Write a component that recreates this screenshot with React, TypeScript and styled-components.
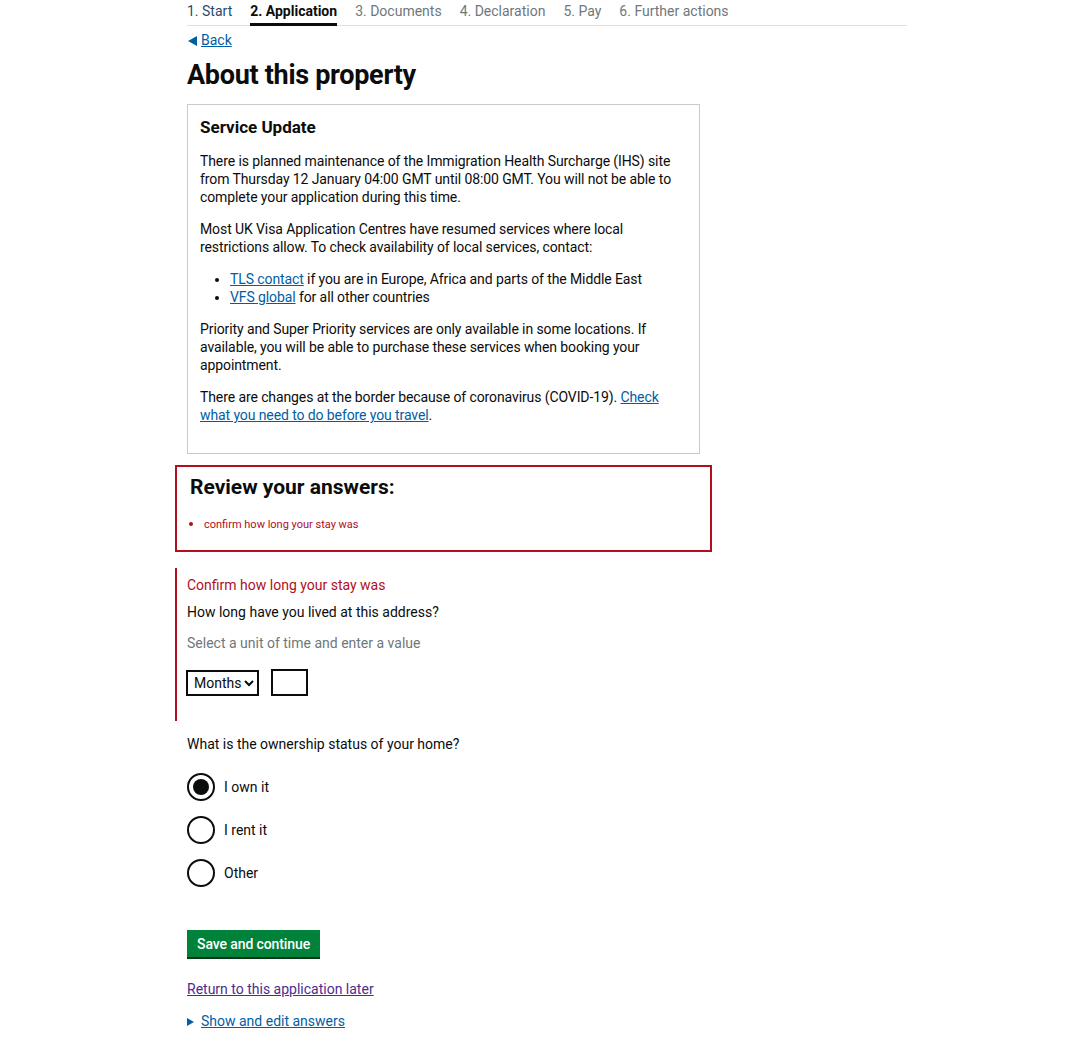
import React from "react";
import styled, { createGlobalStyle } from "styled-components";

const Global = createGlobalStyle`
  html, body { margin: 0; padding: 0; background: #fff; }
  body { font-family: Roboto, "Liberation Sans", Arial, sans-serif; color: #0b0c0c; }
  * { box-sizing: border-box; }
`;

const Page = styled.div`
  width: 720px;
  margin-left: 187px;
  display: flex;
  flex-direction: column;
`;

const StepNav = styled.nav`
  display: flex;
  gap: 18px;
  border-bottom: 1px solid #dee0e2;
  height: 26px;
  align-items: flex-start;
  padding-top: 3px;
`;

const Step = styled.span<{ $state: "done" | "active" | "todo" }>`
  font-size: 14px;
  line-height: 17px;
  height: 23px;
  color: ${(p) => (p.$state === "done" ? "#2b4a6b" : p.$state === "active" ? "#0b0c0c" : "#6f777b")};
  font-weight: ${(p) => (p.$state === "active" ? 700 : 400)};
  border-bottom: ${(p) => (p.$state === "active" ? "3px solid #0b0c0c" : "3px solid transparent")};
`;

const BackLink = styled.a`
  margin-top: 6px;
  display: inline-flex;
  align-items: center;
  gap: 4px;
  font-size: 14px;
  line-height: 17px;
  color: #005ea5;
  text-decoration: underline;
  align-self: flex-start;
  &::before {
    content: "";
    margin-left: 1px;
    border-style: solid;
    border-width: 5.5px 9px 5.5px 0;
    border-color: transparent #005ea5 transparent transparent;
  }
`;

const H1 = styled.h1`
  margin: 10px 0 0;
  font-size: 27px;
  line-height: 32px;
  font-weight: 700;
  letter-spacing: -0.3px;
`;

const Notice = styled.section`
  margin-top: 13px;
  width: 513px;
  border: 1px solid #c8cacb;
  padding: 12px 12px 29px;
  letter-spacing: -0.1px;
`;

const NoticeTitle = styled.h2`
  margin: 0 0 15px;
  font-size: 17px;
  line-height: 20px;
  font-weight: 700;
  letter-spacing: 0;
`;

const P = styled.p`
  margin: 0 0 14px;
  font-size: 14px;
  line-height: 18px;
  &:last-child { margin-bottom: 0; }
`;

const List = styled.ul`
  margin: 0 0 14px;
  padding-left: 30px;
  font-size: 14px;
  line-height: 18px;
`;

const Link = styled.a`
  color: #005ea5;
  text-decoration: underline;
`;

const ErrorSummary = styled.section`
  margin: 11px 0 0 -12px;
  width: 537px;
  border: 2px solid #b10e1e;
  padding: 8px 13px 18px;
`;

const ErrorTitle = styled.h2`
  margin: 0 0 17px;
  font-size: 21px;
  line-height: 25px;
  font-weight: 700;
`;

const ErrorList = styled.ul`
  margin: 0;
  padding-left: 14px;
  color: #b10e1e;
  font-size: 11px;
  line-height: 14px;
  li::marker { font-size: 13px; }
`;

const ErrorGroup = styled.div`
  margin: 16px 0 0 -12px;
  border-left: 2px solid #b10e1e;
  padding: 9px 0 25px 10px;
  display: flex;
  flex-direction: column;
`;

const ErrorMessage = styled.span`
  color: #b10e1e;
  font-size: 14px;
  line-height: 17px;
`;

const Label = styled.span<{ $gap?: number }>`
  margin-top: ${(p) => p.$gap ?? 0}px;
  font-size: 14px;
  line-height: 17px;
  color: #0b0c0c;
`;

const Hint = styled.span`
  margin-top: 14px;
  font-size: 14px;
  line-height: 17px;
  color: #6f777b;
`;

const Row = styled.div`
  margin-top: 17px;
  display: flex;
  gap: 12px;
  align-items: center;
`;

const Select = styled.div`
  margin-left: -1px;
  width: 73px;
  height: 26px;
  border: 2px solid #0b0c0c;
  display: flex;
  align-items: center;
  padding-left: 6px;
  gap: 3px;
  font-size: 14px;
`;

const TextBox = styled.div`
  width: 37px;
  height: 27px;
  border: 2px solid #0b0c0c;
`;

const Fieldset = styled.div`
  margin-top: 15px;
  display: flex;
  flex-direction: column;
`;

const RadioRow = styled.label`
  display: flex;
  align-items: center;
  gap: 9px;
  height: 28px;
  font-size: 14px;
`;

const Radio = styled.span<{ $checked?: boolean }>`
  width: 28px;
  height: 28px;
  border-radius: 50%;
  border: 2px solid #0b0c0c;
  display: flex;
  align-items: center;
  justify-content: center;
  &::after {
    content: "";
    width: 16px;
    height: 16px;
    border-radius: 50%;
    background: ${(p) => (p.$checked ? "#0b0c0c" : "transparent")};
  }
`;

const Radios = styled.div`
  margin-top: 20px;
  display: flex;
  flex-direction: column;
  gap: 15px;
`;

const Button = styled.button`
  margin-top: 43px;
  align-self: flex-start;
  background: #00823b;
  color: #fff;
  border: 0;
  box-shadow: 0 2px 0 #003618;
  font-family: inherit;
  font-size: 14px;
  font-weight: 500;
  line-height: 17px;
  padding: 5px 10px 4px;
  height: 27px;
  letter-spacing: -0.1px;
`;

const LaterLink = styled.a`
  margin-top: 24px;
  align-self: flex-start;
  font-size: 14px;
  line-height: 17px;
  color: #4c2c92;
  text-decoration: underline;
`;

const Details = styled.div`
  margin-top: 15px;
  display: flex;
  align-items: center;
  gap: 7px;
  font-size: 14px;
  line-height: 17px;
  &::before {
    content: "";
    border-style: solid;
    border-width: 4.5px 0 4.5px 7px;
    border-color: transparent transparent transparent #005ea5;
  }
`;

export default function App() {
  return (
    <>
      <Global />
      <Page>
        <StepNav>
          <Step $state="done">1. Start</Step>
          <Step $state="active">2. Application</Step>
          <Step $state="todo">3. Documents</Step>
          <Step $state="todo">4. Declaration</Step>
          <Step $state="todo">5. Pay</Step>
          <Step $state="todo">6. Further actions</Step>
        </StepNav>
        <BackLink href="#">Back</BackLink>
        <H1>About this property</H1>
        <Notice>
          <NoticeTitle>Service Update</NoticeTitle>
          <P>
            There is planned maintenance of the Immigration Health Surcharge (IHS) site from Thursday 12 January
            04:00 GMT until 08:00 GMT. You will not be able to complete your application during this time.
          </P>
          <P>
            Most UK Visa Application Centres have resumed services where local restrictions allow. To check
            availability of local services, contact:
          </P>
          <List>
            <li>
              <Link href="#">TLS contact</Link> if you are in Europe, Africa and parts of the Middle East
            </li>
            <li>
              <Link href="#">VFS global</Link> for all other countries
            </li>
          </List>
          <P>
            Priority and Super Priority services are only available in some locations. If available, you will be
            able to purchase these services when booking your appointment.
          </P>
          <P>
            There are changes at the border because of coronavirus (COVID-19).{" "}
            <Link href="#">Check what you need to do before you travel</Link>.
          </P>
        </Notice>
        <ErrorSummary>
          <ErrorTitle>Review your answers:</ErrorTitle>
          <ErrorList>
            <li>confirm how long your stay was</li>
          </ErrorList>
        </ErrorSummary>
        <ErrorGroup>
          <ErrorMessage>Confirm how long your stay was</ErrorMessage>
          <Label $gap={10}>How long have you lived at this address?</Label>
          <Hint>Select a unit of time and enter a value</Hint>
          <Row>
            <Select>
              Months
              <svg width="10" height="8" viewBox="0 0 10 8">
                <path d="M1 2l4 4 4-4" fill="none" stroke="#0b0c0c" strokeWidth="2" />
              </svg>
            </Select>
            <TextBox />
          </Row>
        </ErrorGroup>
        <Fieldset>
          <Label>What is the ownership status of your home?</Label>
          <Radios>
            <RadioRow>
              <Radio $checked />I own it
            </RadioRow>
            <RadioRow>
              <Radio />I rent it
            </RadioRow>
            <RadioRow>
              <Radio />Other
            </RadioRow>
          </Radios>
        </Fieldset>
        <Button>Save and continue</Button>
        <LaterLink href="#">Return to this application later</LaterLink>
        <Details>
          <Link href="#">Show and edit answers</Link>
        </Details>
      </Page>
    </>
  );
}
